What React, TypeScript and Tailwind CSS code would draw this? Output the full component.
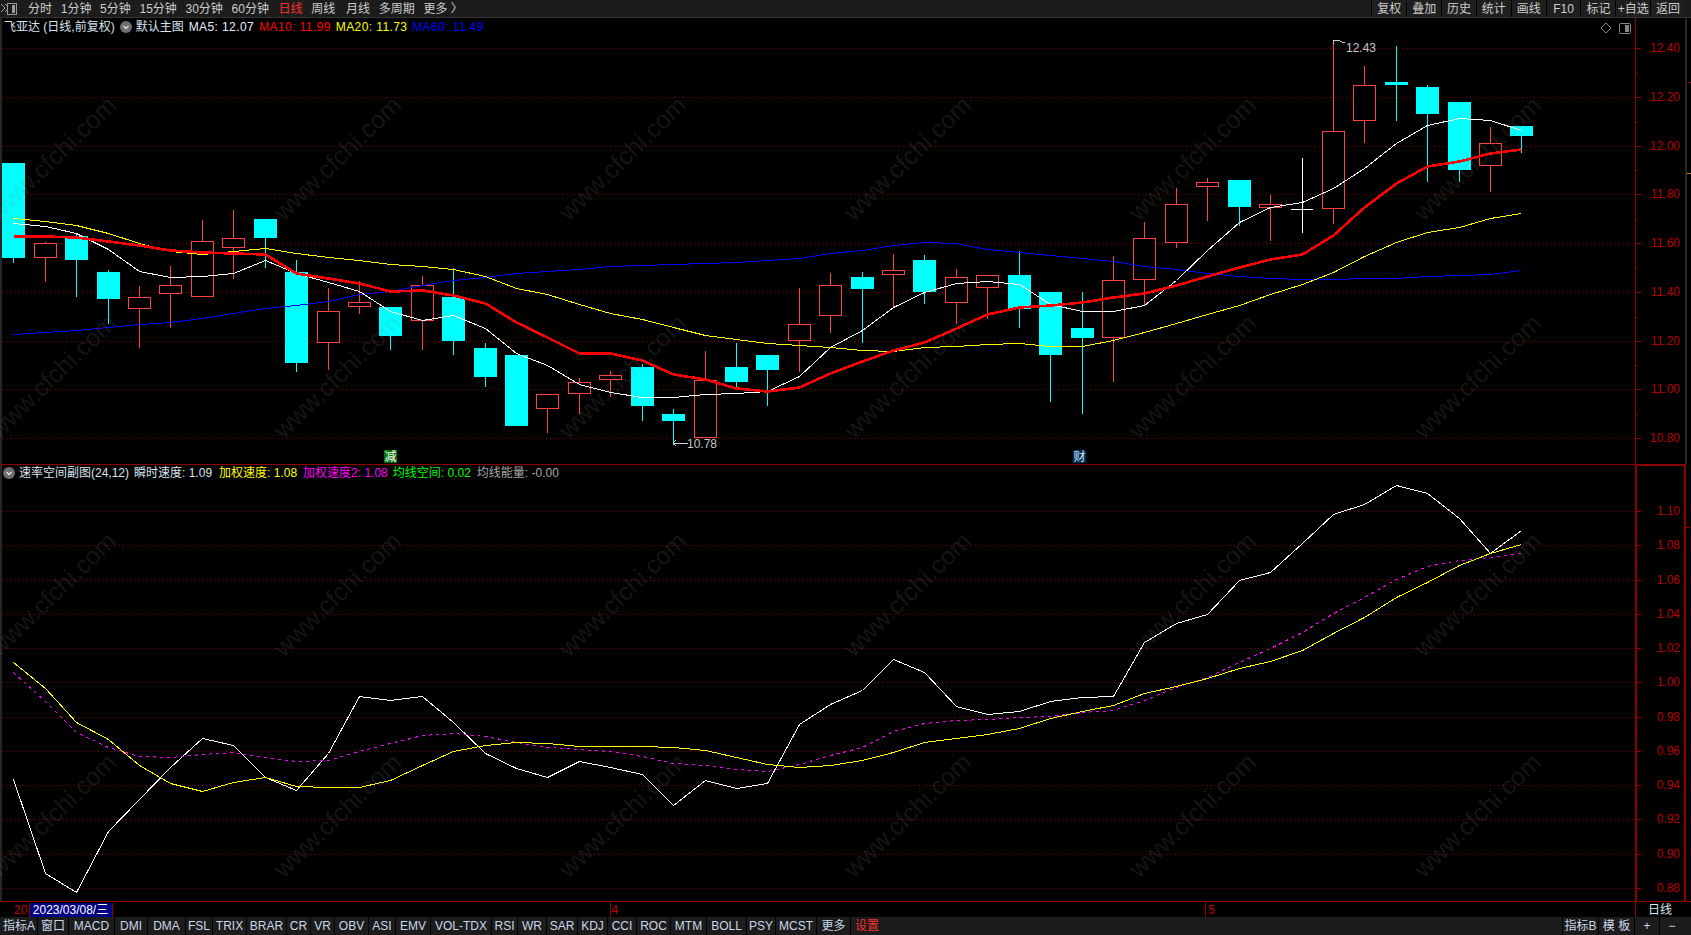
const FONT = `font-['Liberation_Sans','Noto_Sans_CJK_SC',sans-serif]`;

const PERIODS = [
  { label: "分时", cls: "text-[#cccccc]" },
  { label: "1分钟", cls: "text-[#cccccc]" },
  { label: "5分钟", cls: "text-[#cccccc]" },
  { label: "15分钟", cls: "text-[#cccccc]" },
  { label: "30分钟", cls: "text-[#cccccc]" },
  { label: "60分钟", cls: "text-[#cccccc]" },
  { label: "日线", cls: "ml-px text-[#ff3030]" },
  { label: "周线", cls: "text-[#cccccc]" },
  { label: "月线", cls: "ml-[2px] text-[#cccccc]" },
  { label: "多周期", cls: "text-[#cccccc]" },
  { label: "更多 〉", cls: "text-[#cccccc]" },
];

const ACTIONS = ["复权", "叠加", "历史", "统计", "画线", "F10", "标记", "+自选", "返回"];

const TABS = [
  { label: "指标A", w: "w-[37px]" },
  { label: "窗口", w: "w-[31px]" },
  { label: "MACD", w: "w-[46px]" },
  { label: "DMI", w: "w-[33px]" },
  { label: "DMA", w: "w-[38px]" },
  { label: "FSL", w: "w-[27px]" },
  { label: "TRIX", w: "w-[34px]" },
  { label: "BRAR", w: "w-[40px]" },
  { label: "CR", w: "w-[24px]" },
  { label: "VR", w: "w-[24px]" },
  { label: "OBV", w: "w-[34px]" },
  { label: "ASI", w: "w-[27px]" },
  { label: "EMV", w: "w-[35px]" },
  { label: "VOL-TDX", w: "w-[61px]" },
  { label: "RSI", w: "w-[26px]" },
  { label: "WR", w: "w-[29px]" },
  { label: "SAR", w: "w-[31px]" },
  { label: "KDJ", w: "w-[30px]" },
  { label: "CCI", w: "w-[29px]" },
  { label: "ROC", w: "w-[34px]" },
  { label: "MTM", w: "w-[36px]" },
  { label: "BOLL", w: "w-[40px]" },
  { label: "PSY", w: "w-[29px]" },
  { label: "MCST", w: "w-[41px]" },
  { label: "更多", w: "w-[34px]" },
];

type Candle = [kind: "r" | "c" | "w", top: number, bot: number, hi: number, lo: number];

// body top, body bottom, wick top, wick bottom, all in page pixels
const CANDLES: Candle[] = [
  ["c", 163, 258, 163, 263], ["r", 243, 258, 242, 282], ["c", 236, 260, 233, 297],
  ["c", 272, 299, 270, 324], ["r", 297, 309, 286, 348], ["r", 285, 294, 266, 328],
  ["r", 241, 297, 220, 297], ["r", 238, 248, 210, 279], ["c", 219, 238, 219, 268],
  ["c", 272, 363, 260, 372], ["r", 311, 343, 288, 370], ["r", 302, 307, 281, 314],
  ["c", 307, 336, 307, 350], ["r", 285, 321, 276, 350], ["c", 297, 341, 268, 355],
  ["c", 348, 377, 343, 387], ["c", 355, 426, 355, 426], ["r", 394, 409, 394, 433],
  ["r", 382, 394, 378, 414], ["r", 375, 380, 371, 397], ["c", 367, 406, 364, 421],
  ["c", 414, 421, 409, 445], ["r", 380, 438, 351, 438], ["c", 367, 382, 343, 387],
  ["c", 355, 370, 355, 406], ["r", 324, 341, 288, 372], ["r", 285, 316, 273, 333],
  ["c", 277, 289, 272, 343], ["r", 270, 275, 254, 307], ["c", 260, 292, 255, 304],
  ["r", 277, 303, 269, 324], ["r", 275, 288, 275, 319], ["c", 275, 309, 251, 328],
  ["c", 292, 355, 292, 402], ["c", 328, 338, 292, 414], ["r", 280, 338, 256, 382],
  ["r", 238, 280, 222, 306], ["r", 204, 243, 188, 248], ["r", 182, 187, 178, 221],
  ["c", 180, 207, 180, 226], ["r", 204, 208, 195, 241], ["w", 209, 209, 158, 233],
  ["r", 131, 209, 41, 224], ["r", 85, 121, 66, 143], ["c", 82, 85, 46, 121],
  ["c", 87, 114, 85, 182], ["c", 102, 170, 102, 182], ["r", 143, 166, 127, 192],
  ["c", 126, 136, 126, 153],
];

const MA5 = [223, 226, 233, 249, 271, 277, 276, 273, 260, 273, 282, 291, 311, 320, 315, 328, 353, 365, 384, 392, 397, 397, 394, 393, 391, 376, 347, 330, 307, 292, 283, 281, 284, 304, 311, 311, 305, 280, 250, 222, 207, 202, 188, 168, 143, 125, 118, 120, 130];
const MA10 = [236, 236, 237, 241, 245, 250, 252, 253, 254, 273, 278, 283, 291, 290, 295, 303, 322, 337, 353, 353, 360, 374, 379, 388, 391, 387, 373, 361, 350, 342, 328, 314, 307, 305, 302, 297, 293, 285, 276, 267, 259, 254, 235, 207, 183, 166, 161, 153, 149];
const MA20 = [218, 221, 225, 233, 243, 251, 254, 251, 248, 253, 257, 260, 264, 266, 269, 276, 288, 294, 304, 313, 319, 327, 335, 339, 343, 345, 347, 350, 351, 347, 346, 344, 343, 346, 346, 340, 332, 323, 314, 305, 294, 284, 272, 256, 242, 232, 227, 218, 213];
const MA60 = [334, 332, 330, 327, 324, 322, 318, 313, 308, 305, 301, 294, 291, 285, 280, 277, 273, 271, 269, 266, 265, 264, 263, 262, 260, 258, 253, 250, 245, 242, 243, 249, 252, 255, 258, 261, 266, 269, 273, 276, 278, 279, 279, 278, 278, 276, 275, 274, 270];

const SPEED = [779, 873, 892, 831, 799, 767, 738, 745, 777, 790, 753, 696, 700, 696, 722, 753, 768, 777, 761, 767, 774, 805, 780, 788, 783, 724, 704, 690, 659, 672, 706, 714, 711, 701, 697, 696, 642, 623, 614, 580, 572, 543, 514, 504, 485, 493, 518, 553, 530];
const WEIGHTED = [662, 688, 722, 739, 765, 783, 791, 782, 777, 786, 787, 787, 780, 765, 751, 745, 742, 743, 746, 746, 746, 747, 750, 757, 764, 767, 765, 760, 752, 742, 738, 734, 728, 718, 711, 705, 693, 686, 678, 668, 661, 650, 633, 617, 597, 582, 565, 553, 544];
const WEIGHTED2 = [672, 701, 732, 747, 756, 757, 754, 752, 757, 761, 760, 751, 743, 735, 733, 736, 742, 747, 749, 751, 756, 763, 765, 769, 771, 764, 755, 747, 731, 723, 720, 719, 717, 716, 712, 710, 700, 687, 677, 662, 648, 632, 613, 597, 579, 566, 560, 557, 553];

const UPPER_TICKS = [
  { y: 48, label: "12.40" }, { y: 97, label: "12.20" }, { y: 146, label: "12.00" },
  { y: 194, label: "11.80" }, { y: 243, label: "11.60" }, { y: 292, label: "11.40" },
  { y: 341, label: "11.20" }, { y: 389, label: "11.00" }, { y: 438, label: "10.80" },
];

const LOWER_LABELS = ["1.10", "1.08", "1.06", "1.04", "1.02", "1.00", "0.98", "0.96", "0.94", "0.92", "0.90", "0.88"];
const LOWER_TICKS = LOWER_LABELS.map((label, i) => ({ y: Math.round(511 + i * 34.27), label }));

const WATERMARKS = [158, 376, 594, 815].flatMap((y) =>
  [52, 337, 622, 907, 1192, 1477].map((x) => ({ x, y })),
);

const candleX = (i: number) => Math.round(13.3 + 31.42 * i);
const toPoints = (values: number[]) =>
  values.map((y, i) => `${candleX(i) + 0.5},${y + 0.5}`).join(" ");

const Axis = ({
  ticks,
  top,
  bottom,
  width,
}: {
  ticks: { y: number; label: string }[];
  top: number;
  bottom: number;
  width: number;
}) => (
  <g shapeRendering="crispEdges">
    <rect x={0} y={top} width={2} height={bottom - top} fill="#262626" />
    {ticks.map((t, i) => (
      <g key={t.label}>
        <line x1={2} x2={1635} y1={t.y + 0.5} y2={t.y + 0.5} stroke="#8c0000" strokeDasharray="1 3" />
        <line x1={1635} x2={1641} y1={t.y + 0.5} y2={t.y + 0.5} stroke="#8c0000" />
        {i < ticks.length - 1 && (
          <line
            x1={1635}
            x2={1638}
            y1={Math.round((t.y + ticks[i + 1].y) / 2) + 0.5}
            y2={Math.round((t.y + ticks[i + 1].y) / 2) + 0.5}
            stroke="#8c0000"
          />
        )}
        <text x={1680} y={t.y + 3.5} textAnchor="end" fontSize={12} fill="#b80000" shapeRendering="auto">
          {t.label}
        </text>
      </g>
    ))}
    <rect x={1635} y={top} width={width} height={bottom - top} fill="#8c0000" />
  </g>
);

const UpperChart = () => (
  <svg className="absolute inset-0" width={1691} height={446} viewBox="0 18 1691 446">
    <Axis ticks={UPPER_TICKS} top={18} bottom={464} width={1} />
    <g shapeRendering="crispEdges">
      <rect x={1685} y={18} width={2} height={446} fill="#262626" />
      <rect x={1687} y={82} width={4} height={1} fill="#8c0000" />
      <rect x={1687} y={173} width={4} height={1} fill="#c08020" />
      {CANDLES.map(([kind, top, bot, hi, lo], i) => {
        const cx = candleX(i);
        const color = kind === "r" ? "#ff4040" : kind === "c" ? "#00ffff" : "#ffffff";
        return (
          <g key={i}>
            <line x1={cx + 0.5} x2={cx + 0.5} y1={hi} y2={lo} stroke={color} />
            {kind === "w" && (
              <line x1={cx - 11} x2={cx + 11} y1={top + 0.5} y2={top + 0.5} stroke={color} />
            )}
            {kind === "c" && (
              <rect x={cx - 11} y={top} width={23} height={bot - top} fill={color} />
            )}
            {kind === "r" && (
              <rect
                x={cx - 10.5}
                y={top + 0.5}
                width={22}
                height={bot - top - 1}
                fill="#000000"
                stroke={color}
              />
            )}
          </g>
        );
      })}
      <polyline points={toPoints(MA60)} fill="none" stroke="#0000ff" />
      <polyline points={toPoints(MA20)} fill="none" stroke="#ffff00" />
      <polyline points={toPoints(MA5)} fill="none" stroke="#ffffff" />
      <polyline points={toPoints(MA10)} fill="none" stroke="#ff0000" strokeWidth={2.6} />
      <path d="M1333 41l4-1 8 3M1333 41v3" fill="none" stroke="#d0d0d0" />
      <path d="M688 443h-15m3-3l-3 3 3 3" fill="none" stroke="#d0d0d0" />
    </g>
    <text x={1346} y={52} fontSize={12} fill="#c8c8c8">12.43</text>
    <text x={687} y={448} fontSize={12} fill="#c8c8c8">10.78</text>
    <path d="M1606 23l5 5-5 5-5-5z" fill="none" stroke="#888888" />
    <rect x={1619.5} y={23.5} width={11} height={10} rx={1} fill="none" stroke="#888888" />
    <rect x={1625} y={25} width={4} height={7} fill="#888888" />
  </svg>
);

const LowerChart = () => (
  <svg className="absolute inset-0" width={1691} height={437} viewBox="0 464 1691 437">
    <Axis ticks={LOWER_TICKS} top={464} bottom={901} width={2} />
    <g shapeRendering="crispEdges">
      <rect x={0} y={463} width={1686} height={1.500} fill="#8c0000" />
      <rect x={1635} y={464} width={51} height={2} fill="#8c0000" />
      <rect x={1684} y={464} width={2} height={437} fill="#8c0000" />
      <rect x={1686} y={527} width={4} height={1} fill="#8c0000" />
      <polyline points={toPoints(SPEED)} fill="none" stroke="#ffffff" />
      <polyline points={toPoints(WEIGHTED2)} fill="none" stroke="#ff00ff" strokeDasharray="3 4" />
      <polyline points={toPoints(WEIGHTED)} fill="none" stroke="#ffff00" />
    </g>
  </svg>
);

const CircleChevron = () => (
  <svg width={12} height={12} viewBox="0 0 12 12" className="shrink-0">
    <circle cx={6} cy={6} r={6} fill="#6e6e6e" />
    <path d="M3.5 5l2.5 2.5L8.500 5" fill="none" stroke="#e0e0e0" strokeWidth={1.4} />
  </svg>
);

const App = () => {
  return (
    <div className={`relative flex h-[935px] w-[1691px] flex-col overflow-hidden bg-black text-[12px] leading-none ${FONT}`}>
      <header className="flex h-[18px] shrink-0 border-b border-[#333333] bg-[#1c1c1c]">
        <div className="flex w-[28px] shrink-0 items-center">
          <svg width={18} height={14} viewBox="0 0 18 14">
            <path d="M1 2l4 4-4 4M5 2l4 4-4 4" fill="none" stroke="#9a9a9a" />
            <rect x={7.500} y={1.500} width={9} height={11} fill="#1c1c1c" stroke="#9a9a9a" />
            <rect x={12} y={3} width={3} height={8} fill="#9a9a9a" />
          </svg>
        </div>
        <nav className="flex items-center gap-[8.700px]">
          {PERIODS.map((p) => (
            <span key={p.label} className={p.cls}>{p.label}</span>
          ))}
        </nav>
        <div className="ml-auto mr-[6px] flex">
          {ACTIONS.map((a) => (
            <span
              key={a}
              className="flex w-[34.850px] items-center justify-center border-l border-black bg-[#1f1f1f] text-[#cccccc]"
            >
              {a}
            </span>
          ))}
        </div>
      </header>

      <section className="relative h-[446px] shrink-0">
        <UpperChart />
        <div className="relative flex h-[18px] items-center pl-[4px]">
          <span className="text-[#d8e4ee]">飞亚达 (日线,前复权)</span>
          <span className="ml-[5px]"><CircleChevron /></span>
          <span className="ml-[4px] text-[#d8e4ee]">默认主图</span>
          <span className="ml-[5px] w-[70.500px] tracking-[0.4px] text-[#e6f0ff]">MA5: 12.07</span>
          <span className="w-[76.600px] tracking-[0.4px] text-[#ff0000]">MA10: 11.99</span>
          <span className="w-[76.400px] tracking-[0.4px] text-[#ffff00]">MA20: 11.73</span>
          <span className="tracking-[0.4px] text-[#0000ff]">MA60: 11.49</span>
        </div>
        <div className="absolute left-[384px] top-[432px] flex h-[13px] w-[13px] items-center justify-center bg-[#007000] text-white">
          减
        </div>
        <div className="absolute left-[1073px] top-[432px] flex h-[13px] w-[13px] items-center justify-center bg-[#00305c] text-[#d8e4ee]">
          财
        </div>
      </section>

      <section className="relative h-[437px] shrink-0">
        <LowerChart />
        <div className="relative flex h-[17px] items-center pl-[3px]">
          <CircleChevron />
          <span className="ml-[4px] text-[#d8e4ee]">速率空间副图(24,12)</span>
          <span className="ml-[5px] text-[#d8e4ee]">瞬时速度: 1.09</span>
          <span className="ml-[7px] text-[#ffff00]">加权速度: 1.08</span>
          <span className="ml-[6px] text-[#ff00ff]">加权速度2: 1.08</span>
          <span className="ml-[5px] text-[#00ff00]">均线空间: 0.02</span>
          <span className="ml-[6px] text-[#a8a8a8]">均线能量: -0.00</span>
        </div>
      </section>

      <div className="relative flex h-[16px] shrink-0 items-center border-t border-[#8c0000]">
        <span className="ml-[14px] w-[14.500px] text-[#c00000]">20</span>
        <span className="flex h-[14px] w-[84px] items-center justify-center border-x border-[#8c0000] bg-[#000080] text-white">
          2023/03/08/三
        </span>
        <span className="ml-[497px] h-full border-l border-[#8c0000] pl-[1px] pt-[2px] text-[#c00000]">4</span>
        <span className="ml-[587px] h-full border-l border-[#8c0000] pl-[2px] pt-[2px] text-[#c00000]">5</span>
        <span className="ml-auto mr-[7px] flex h-full w-[49px] items-center justify-center border-l border-[#8c0000] text-[#d8e4ee]">
          日线
        </span>
      </div>

      <footer className="flex h-[18px] shrink-0 bg-[#1c1c1c] pl-px">
        {TABS.map((t) => (
          <span
            key={t.label}
            className={`flex ${t.w} items-center justify-center border-r border-black text-[#c8d8e8]`}
          >
            {t.label}
          </span>
        ))}
        <span className="flex w-[32px] items-center justify-center text-[#ff3030]">设置</span>
        <div className="ml-auto mr-[7px] flex">
          <span className="flex w-[36px] items-center justify-center border-l border-black text-[#c8d8e8]">指标B</span>
          <span className="flex w-[36px] items-center justify-center border-l border-black text-[#c8d8e8]">模 板</span>
          <span className="flex w-[25px] items-center justify-center border-l border-black text-[#c8d8e8]">+</span>
          <span className="flex w-[25px] items-center justify-center border-l border-black text-[#c8d8e8]">−</span>
        </div>
      </footer>

      {/* vendor watermark sits over the whole chart */}
      <svg className="pointer-events-none absolute inset-0" width={1691} height={935}>
        {WATERMARKS.map(({ x, y }) => (
          <text
            key={`${x}-${y}`}
            x={x}
            y={y + 9}
            textAnchor="middle"
            fontSize={25}
            fill="rgba(128,128,128,0.18)"
            transform={`rotate(-44 ${x} ${y})`}
          >
            www.cfchi.com
          </text>
        ))}
      </svg>
    </div>
  );
};

export default App;
